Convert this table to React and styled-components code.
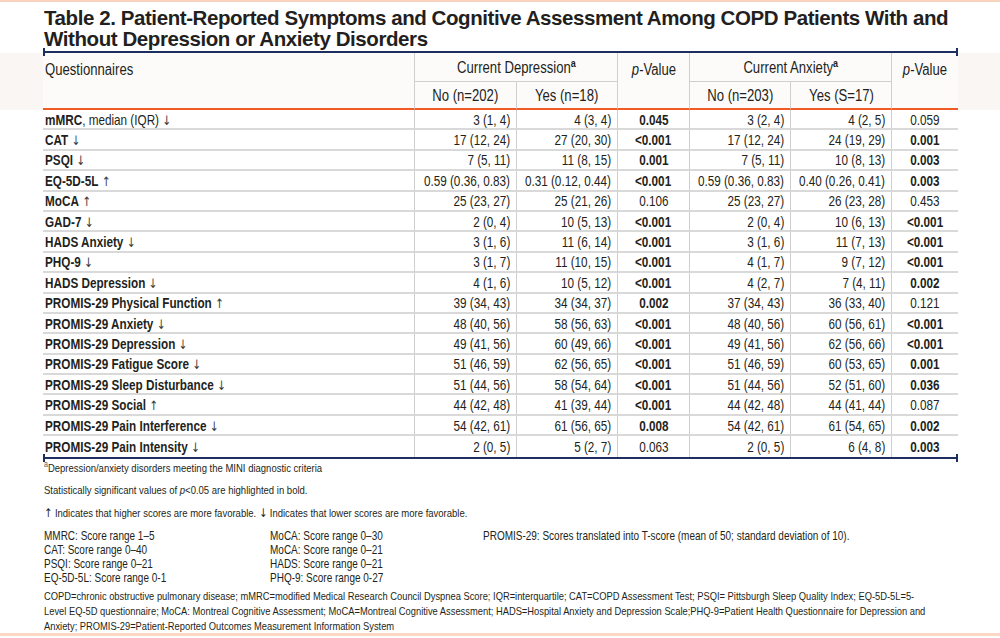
import React from "react";
import styled, { createGlobalStyle } from "styled-components";

const SANS = `"Liberation Sans", Arial, sans-serif`;

const GlobalStyle = createGlobalStyle`
    html, body {
        margin: 0;
        padding: 0;
        background: #ffffff;
    }
    body {
        font-family: ${SANS};
        color: #231f20;
    }
`;

const rows = [
    { label: "mMRC", extra: ", median (IQR)", dir: "down", d: ["3 (1, 4)", "4 (3, 4)", "0.045", true], a: ["3 (2, 4)", "4 (2, 5)", "0.059", false] },
    { label: "CAT", dir: "down", d: ["17 (12, 24)", "27 (20, 30)", "<0.001", true], a: ["17 (12, 24)", "24 (19, 29)", "0.001", true] },
    { label: "PSQI", dir: "down", d: ["7 (5, 11)", "11 (8, 15)", "0.001", true], a: ["7 (5, 11)", "10 (8, 13)", "0.003", true] },
    { label: "EQ-5D-5L", dir: "up", d: ["0.59 (0.36, 0.83)", "0.31 (0.12, 0.44)", "<0.001", true], a: ["0.59 (0.36, 0.83)", "0.40 (0.26, 0.41)", "0.003", true] },
    { label: "MoCA", dir: "up", d: ["25 (23, 27)", "25 (21, 26)", "0.106", false], a: ["25 (23, 27)", "26 (23, 28)", "0.453", false] },
    { label: "GAD-7", dir: "down", d: ["2 (0, 4)", "10 (5, 13)", "<0.001", true], a: ["2 (0, 4)", "10 (6, 13)", "<0.001", true] },
    { label: "HADS Anxiety", dir: "down", d: ["3 (1, 6)", "11 (6, 14)", "<0.001", true], a: ["3 (1, 6)", "11 (7, 13)", "<0.001", true] },
    { label: "PHQ-9", dir: "down", d: ["3 (1, 7)", "11 (10, 15)", "<0.001", true], a: ["4 (1, 7)", "9 (7, 12)", "<0.001", true] },
    { label: "HADS Depression", dir: "down", d: ["4 (1, 6)", "10 (5, 12)", "<0.001", true], a: ["4 (2, 7)", "7 (4, 11)", "0.002", true] },
    { label: "PROMIS-29 Physical Function", dir: "up", d: ["39 (34, 43)", "34 (34, 37)", "0.002", true], a: ["37 (34, 43)", "36 (33, 40)", "0.121", false] },
    { label: "PROMIS-29 Anxiety", dir: "down", d: ["48 (40, 56)", "58 (56, 63)", "<0.001", true], a: ["48 (40, 56)", "60 (56, 61)", "<0.001", true] },
    { label: "PROMIS-29 Depression", dir: "down", d: ["49 (41, 56)", "60 (49, 66)", "<0.001", true], a: ["49 (41, 56)", "62 (56, 66)", "<0.001", true] },
    { label: "PROMIS-29 Fatigue Score", dir: "down", d: ["51 (46, 59)", "62 (56, 65)", "<0.001", true], a: ["51 (46, 59)", "60 (53, 65)", "0.001", true] },
    { label: "PROMIS-29 Sleep Disturbance", dir: "down", d: ["51 (44, 56)", "58 (54, 64)", "<0.001", true], a: ["51 (44, 56)", "52 (51, 60)", "0.036", true] },
    { label: "PROMIS-29 Social", dir: "up", d: ["44 (42, 48)", "41 (39, 44)", "<0.001", true], a: ["44 (42, 48)", "44 (41, 44)", "0.087", false] },
    { label: "PROMIS-29 Pain Interference", dir: "down", d: ["54 (42, 61)", "61 (56, 65)", "0.008", true], a: ["54 (42, 61)", "61 (54, 65)", "0.002", true] },
    { label: "PROMIS-29 Pain Intensity", dir: "down", d: ["2 (0, 5)", "5 (2, 7)", "0.063", false], a: ["2 (0, 5)", "6 (4, 8)", "0.003", true] },
];

const ranges = [
    ["MMRC: Score range 1–5", "MoCA: Score range 0–30", "PROMIS-29: Scores translated into T-score (mean of 50; standard deviation of 10)."],
    ["CAT: Score range 0–40", "MoCA: Score range 0–21", ""],
    ["PSQI: Score range 0–21", "HADS: Score range 0–21", ""],
    ["EQ-5D-5L: Score range 0-1", "PHQ-9: Score range 0-27", ""],
];

const abbrevLines = [
    "COPD=chronic obstructive pulmonary disease; mMRC=modified Medical Research Council Dyspnea Score; IQR=interquartile; CAT=COPD Assessment Test; PSQI= Pittsburgh Sleep Quality Index; EQ-5D-5L=5-",
    "Level EQ-5D questionnaire; MoCA: Montreal Cognitive Assessment; MoCA=Montreal Cognitive Assessment; HADS=Hospital Anxiety and Depression Scale;PHQ-9=Patient Health Questionnaire for Depression and",
    "Anxiety; PROMIS-29=Patient-Reported Outcomes Measurement Information System",
];

// condensed text: the source uses a narrow face, so squeeze Liberation Sans
const Fit = ({ align = "left", children }) => (
    <FitBox $align={align}>
        <Narrow $align={align}>{children}</Narrow>
    </FitBox>
);

const Arrow = ({ dir }) => <ArrowGlyph>{dir === "up" ? "↑" : "↓"}</ArrowGlyph>;

const App = () => {
    return (
        <Page>
            <GlobalStyle />
            <Title>
                Table 2. Patient-Reported Symptoms and Cognitive Assessment Among COPD Patients With and<br />
                Without Depression or Anxiety Disorders
            </Title>
            <Rule $gap={2} />
            <HeaderBand>
                <Table>
                    <colgroup>
                        <col style={{ width: 372 }} />
                        <col style={{ width: 102 }} />
                        <col style={{ width: 101 }} />
                        <col style={{ width: 72 }} />
                        <col style={{ width: 101 }} />
                        <col style={{ width: 101 }} />
                        <col style={{ width: 66 }} />
                    </colgroup>
                    <thead>
                        <tr>
                            <HeadCell rowSpan={2}><Fit>Questionnaires</Fit></HeadCell>
                            <GroupCell colSpan={2}><Fit align="center">Current Depression<Sup>a</Sup></Fit></GroupCell>
                            <HeadCell rowSpan={2}><Fit align="center"><i>p</i>-Value</Fit></HeadCell>
                            <GroupCell colSpan={2}><Fit align="center">Current Anxiety<Sup>a</Sup></Fit></GroupCell>
                            <HeadCell rowSpan={2} $last><Fit align="center"><i>p</i>-Value</Fit></HeadCell>
                        </tr>
                        <tr>
                            <SubCell><Fit align="center">No (n=202)</Fit></SubCell>
                            <SubCell><Fit align="center">Yes (n=18)</Fit></SubCell>
                            <SubCell><Fit align="center">No (n=203)</Fit></SubCell>
                            <SubCell><Fit align="center">Yes (S=17)</Fit></SubCell>
                        </tr>
                    </thead>
                    <tbody>
                        {rows.map((r, i) => (
                            <BodyRow key={r.label} $last={i === rows.length - 1}>
                                <LabelCell>
                                    <Fit><b>{r.label}</b>{r.extra}{" "}<Arrow dir={r.dir} /></Fit>
                                </LabelCell>
                                <ValueCell><Fit align="right">{r.d[0]}</Fit></ValueCell>
                                <ValueCell><Fit align="right">{r.d[1]}</Fit></ValueCell>
                                <PCell $bold={r.d[3]}><Fit align="center">{r.d[2]}</Fit></PCell>
                                <ValueCell><Fit align="right">{r.a[0]}</Fit></ValueCell>
                                <ValueCell><Fit align="right">{r.a[1]}</Fit></ValueCell>
                                <PCell $bold={r.a[3]} $last><Fit align="center">{r.a[2]}</Fit></PCell>
                            </BodyRow>
                        ))}
                    </tbody>
                </Table>
            </HeaderBand>
            <Rule $gap={0} />
            <Notes>
                <Note><Fit><NoteSup>a</NoteSup>Depression/anxiety disorders meeting the MINI diagnostic criteria</Fit></Note>
                <Note><Fit>Statistically significant values of <i>p</i>&lt;0.05 are highlighted in bold.</Fit></Note>
                <Note><Fit><NoteArrow>↑</NoteArrow> Indicates that higher scores are more favorable. <NoteArrow>↓</NoteArrow> Indicates that lower scores are more favorable.</Fit></Note>
                <RangeGrid>
                    {ranges.flat().map((t, i) => (
                        <Fit key={i}>{t}</Fit>
                    ))}
                </RangeGrid>
                <Abbrev>
                    {abbrevLines.map((t) => (
                        <Fit key={t}>{t}</Fit>
                    ))}
                </Abbrev>
            </Notes>
        </Page>
    );
};

export default App;

const Page = styled.div`
    width: 1000px;
    height: 638px;
    box-sizing: border-box;
    border-top: 2px solid #fad3be;
    overflow: hidden;
    position: relative;
    &::after {
        content: "";
        position: absolute;
        left: 0;
        right: 0;
        bottom: 2px;
        height: 3px;
        background: #fbd6c2;
    }
`;

const FitBox = styled.div`
    display: flex;
    justify-content: ${(p) => (p.$align === "right" ? "flex-end" : p.$align === "center" ? "center" : "flex-start")};
    white-space: nowrap;
`;

const Narrow = styled.span`
    flex: none;
    display: inline-block;
    transform: scaleX(0.82);
    transform-origin: ${(p) => p.$align} center;
`;

const Title = styled.h1`
    margin: 0;
    padding: 5px 0 0 44px;
    font-family: ${SANS};
    font-weight: 700;
    font-size: 20.5px;
    letter-spacing: -0.42px;
    line-height: 21px;
    color: #231f20;
    white-space: nowrap;
`;

const Rule = styled.div`
    position: relative;
    margin: ${(p) => p.$gap}px 42px 0 43px;
    height: 0;
    border-top: 2px solid #1c2f5e;
    &::before, &::after {
        content: "";
        position: absolute;
        top: -5px;
        width: 2px;
        height: 8px;
        background: #1c2f5e;
    }
    &::before { left: 0; }
    &::after { right: 0; }
`;

const HeaderBand = styled.div`
    background: linear-gradient(to bottom, #faf6f4 0, #faf6f4 57px, #ffffff 57px);
    padding: 0 42px 0 43px;
`;

const Table = styled.table`
    width: 915px;
    table-layout: fixed;
    border-collapse: separate;
    border-spacing: 0;
    font-family: ${SANS};
    color: #231f20;
    background: #fdfbfa;
`;

const HeadCell = styled.th`
    font-weight: 400;
    font-size: 16px;
    line-height: 18px;
    vertical-align: top;
    padding: 8px 2px 0;
    border-right: ${(p) => (p.$last ? "none" : "1.5px solid #cfcfcf")};
    border-bottom: 2px solid #f15a24;
    height: 48px;
    box-sizing: border-box;
`;

const GroupCell = styled.th`
    font-weight: 400;
    font-size: 16px;
    line-height: 18px;
    vertical-align: middle;
    height: 29px;
    padding: 2px 0 0;
    border-right: 1.5px solid #cfcfcf;
    border-bottom: 1.5px solid #cfcfcf;
    box-sizing: border-box;
`;

const Sup = styled.sup`
    font-weight: 700;
    font-size: 11px;
    line-height: 0;
`;

const SubCell = styled.th`
    font-weight: 400;
    font-size: 16px;
    line-height: 18px;
    height: 28px;
    padding: 2px 0 0;
    border-right: 1.5px solid #cfcfcf;
    border-bottom: 2px solid #f15a24;
    box-sizing: border-box;
`;

const BodyRow = styled.tr`
    background: #ffffff;
    & > td {
        border-bottom: ${(p) => (p.$last ? "none" : "2px solid #d9d9d9")};
        height: 20.4px;
    }
`;

const cell = `
    font-size: 14.3px;
    line-height: 16px;
    padding: 1px 6px 0;
    box-sizing: border-box;
    white-space: nowrap;
    vertical-align: middle;
    overflow: visible;
`;

const LabelCell = styled.td`
    ${cell}
    padding-left: 2px;
    border-right: 1.5px solid #cfcfcf;
    b { font-weight: 700; }
`;

const ArrowGlyph = styled.span`
    font-family: "DejaVu Sans", sans-serif;
    font-weight: 400;
    font-size: 13px;
    line-height: 0;
    color: #3a3a3a;
`;

const ValueCell = styled.td`
    ${cell}
    border-right: 1.5px solid #cfcfcf;
`;

const PCell = styled.td`
    ${cell}
    font-weight: ${(p) => (p.$bold ? 700 : 400)};
    border-right: ${(p) => (p.$last ? "none" : "1.5px solid #cfcfcf")};
`;

const Notes = styled.div`
    padding: 0 40px 0 44px;
    font-family: ${SANS};
    font-size: 11.6px;
    color: #231f20;
`;

const Note = styled.div`
    height: 22.5px;
    line-height: 18px;
`;

const NoteSup = styled.sup`
    font-size: 8.5px;
    line-height: 0;
    color: #555;
`;

const NoteArrow = styled.span`
    font-family: "DejaVu Sans", sans-serif;
    font-size: 12px;
    line-height: 0;
`;

const RangeGrid = styled.div`
    display: grid;
    grid-template-columns: 226px 213px 1fr;
    grid-auto-rows: 14px;
    line-height: 14px;
    margin-top: 2.5px;
    font-size: 12.2px;
`;

const Abbrev = styled.div`
    margin-top: 4px;
    font-size: 11.4px;
    line-height: 15px;
`;
